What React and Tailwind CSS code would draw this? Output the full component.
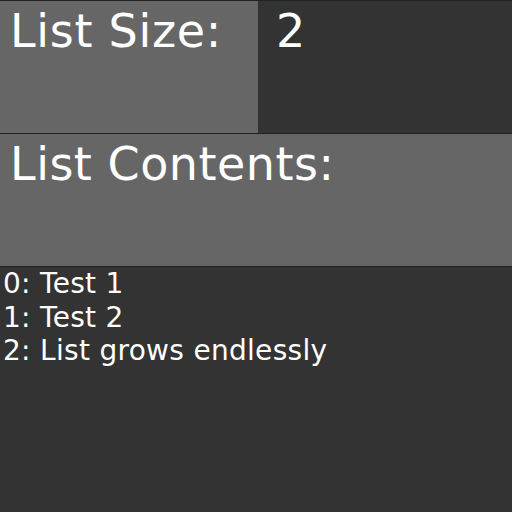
export default function App() {
  return (
    <div className="w-[512px] h-[512px] bg-[#333333] text-white overflow-hidden" style={{ fontFamily: '"DejaVu Sans", Verdana, sans-serif' }}>
      <div className="flex h-[133px] border-t border-[#222222]">
        <div className="w-[258px] bg-[#666666] pl-[10px] pt-[4px] text-[46px] leading-[53px] tracking-[0.7px]">List Size:</div>
        <div className="flex-1 bg-[#333333] pl-[18px] pt-[4px] text-[46px] leading-[53px]">2</div>
      </div>
      <div className="h-[133px] border-t border-[#222222] bg-[#666666] pl-[10px] pt-[4px] text-[46px] leading-[53px] tracking-[0.5px]">List Contents:</div>
      <div className="border-t border-[#222222] pl-[3px] text-[28px] leading-[33.5px] tracking-[0.3px]">
        <div>0: Test 1</div>
        <div>1: Test 2</div>
        <div>2: List grows endlessly</div>
      </div>
    </div>
  );
}
